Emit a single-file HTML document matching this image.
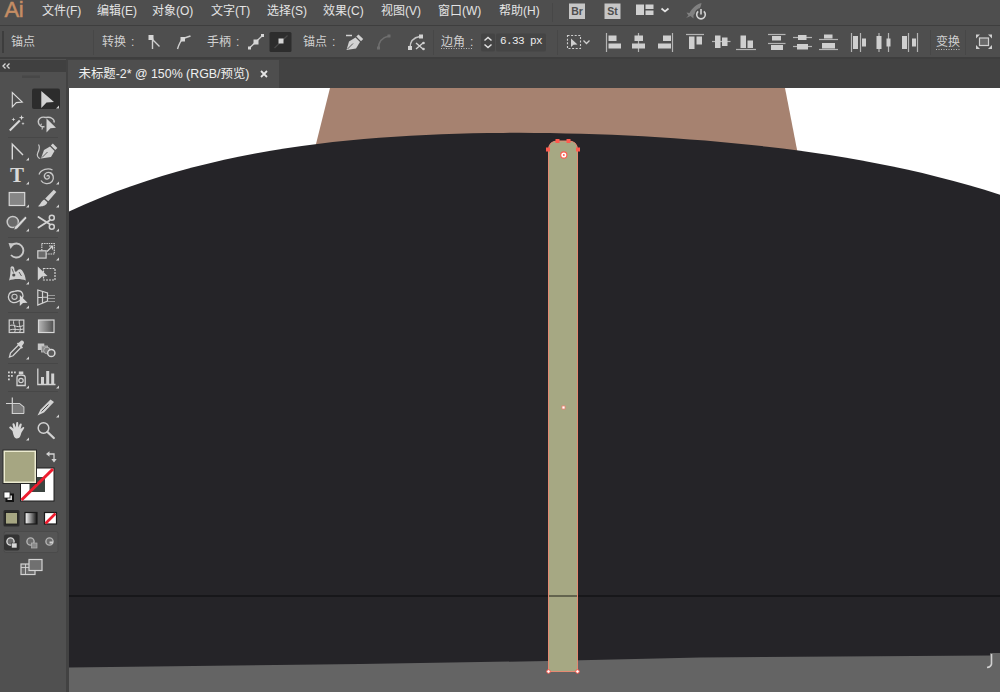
<!DOCTYPE html>
<html lang="zh-CN">
<head>
<meta charset="utf-8">
<title>Ai</title>
<style>
*{box-sizing:border-box;margin:0;padding:0}
html,body{width:1000px;height:692px;overflow:hidden;background:#535353;font-family:"Liberation Sans","Noto Sans CJK SC",sans-serif;}
#app{position:relative;width:1000px;height:692px;background:#4e4e4e;overflow:hidden}
.abs{position:absolute}
#menubar{left:0;top:0;width:1000px;height:25px;background:#4e4e4e}
#menubar .mi{position:absolute;top:3px;font-size:12px;line-height:16px;color:#e4e4e4;white-space:nowrap}
#ailogo{position:absolute;left:4.500px;top:-1.500px;font-size:22px;line-height:22px;color:#c48d64;font-weight:400;letter-spacing:-0.300px;-webkit-text-stroke:0.500px #c48d64}
#ctrl{z-index:2;left:0;top:25px;width:1000px;height:34px;background:transparent;border-top:1px solid #3e3e3e;border-bottom:2px solid #3e3e3e}
#ctrl .t{position:absolute;z-index:5;top:7.500px;font-size:12px;line-height:16px;color:#d0d0d0;white-space:nowrap}
#tabbar{left:68px;top:59px;width:932px;height:29px;background:#424242}
#tab{position:absolute;left:0;top:0.500px;width:210.500px;height:28.500px;background:#4e4e4e;color:#e8e8e8;font-size:12px;line-height:16px}
#tools{left:0;top:59px;width:66px;height:633px;background:#505050}
#tools .hd{position:absolute;left:0;top:1px;width:66px;height:12px;background:#404040}
#gut{left:66px;top:59px;width:3px;height:633px;background:#424242}
#canvas{left:69px;top:88px;width:931px;height:604px;background:#fff;overflow:hidden}
</style>
</head>
<body>
<div id="app">
  <div id="menubar" class="abs">
    <div id="ailogo">Ai</div>
    <div class="mi" style="left:42px">文件(F)</div>
    <div class="mi" style="left:97px">编辑(E)</div>
    <div class="mi" style="left:152px">对象(O)</div>
    <div class="mi" style="left:211px">文字(T)</div>
    <div class="mi" style="left:267px">选择(S)</div>
    <div class="mi" style="left:323px">效果(C)</div>
    <div class="mi" style="left:381px">视图(V)</div>
    <div class="mi" style="left:438px">窗口(W)</div>
    <div class="mi" style="left:499px">帮助(H)</div>
    <svg class="abs" style="left:540px;top:0;z-index:1" width="200" height="25" viewBox="540 0 200 25" fill="none">
      <line x1="552.500" y1="3" x2="552.500" y2="22" stroke="#474747" stroke-width="1"/>
      <rect x="569" y="3.500" width="16" height="15.500" fill="#c6c6c6"/>
      <text x="577" y="15.300" text-anchor="middle" font-family="'Liberation Sans',sans-serif" font-weight="700" font-size="10.500" fill="#4e4e4e">Br</text>
      <rect x="604.500" y="3.500" width="16" height="15.500" fill="#c6c6c6"/>
      <text x="612.500" y="15.300" text-anchor="middle" font-family="'Liberation Sans',sans-serif" font-weight="700" font-size="10.500" fill="#4e4e4e">St</text>
      <rect x="636" y="4.500" width="8" height="10.500" fill="#d0d0d0"/>
      <rect x="645.500" y="4.500" width="8" height="4.500" fill="#d0d0d0"/>
      <rect x="645.500" y="10.500" width="8" height="4.500" fill="#d0d0d0"/>
      <path d="M661.500,8.500 L665,11.500 L668.500,8.500" stroke="#e4e4e4" stroke-width="1.700"/>
      <path d="M701.500,3 C697,4 692,8 689.500,13 L686.500,12.500 L688.500,15.500 L686,18 L690.500,16 L693.500,18.500 L693.500,15 C698,12 701,8 701.500,3 Z" fill="#808080"/>
      <circle cx="701" cy="14.500" r="6.500" fill="#4e4e4e"/>
      <path d="M698.200,11.300 A4.300,4.300 0 1 0 703.800,11.300" stroke="#d4d4d4" stroke-width="1.600"/>
      <line x1="701" y1="9" x2="701" y2="14.500" stroke="#d4d4d4" stroke-width="1.600"/>
    </svg>
  </div>
  <div id="ctrl" class="abs">
    <div class="t" style="left:11px">锚点</div>
    <div class="t" style="left:102px">转换<span style="margin-left:5px">:</span></div>
    <div class="t" style="left:207px">手柄<span style="margin-left:5px">:</span></div>
    <div class="t" style="left:303px">锚点<span style="margin-left:5px">:</span></div>
    <div class="t" style="left:441px">边角<span style="margin-left:5px">:</span></div>
    <div class="t" style="left:936px">变换</div>
    <div class="t" style="left:500px;top:8px;line-height:14px;font-family:'Liberation Mono',monospace;font-size:11px;color:#ececec;letter-spacing:-0.600px">6.33 px</div>
  </div>
  <svg class="abs" style="left:0;top:25px;z-index:1" width="1000" height="34" viewBox="0 25 1000 34" fill="none">
      <!-- grip & separators -->
      <rect x="2" y="31" width="2" height="22" fill="#3d3d3d"/>
      <g stroke="#474747" stroke-width="1"><line x1="93.500" y1="30" x2="93.500" y2="55"/><line x1="433.500" y1="30" x2="433.500" y2="55"/><line x1="557.500" y1="30" x2="557.500" y2="55"/><line x1="930.500" y1="30" x2="930.500" y2="55"/><line x1="965.500" y1="30" x2="965.500" y2="55"/></g>
      <!-- convert icons -->
      <path d="M152.500,38 L152.500,49 M152.500,39.500 L159.500,46.500" stroke="#cfcfcf" stroke-width="1.400"/>
      <rect x="148.500" y="35" width="5" height="5" fill="#d6d6d6"/>
      <path d="M177.500,49 C179,44 180.500,41 183,38.500 C185.500,37.500 188,37 190.500,36" stroke="#cfcfcf" stroke-width="1.400"/>
      <rect x="180.500" y="37" width="4.500" height="4.500" fill="#d6d6d6"/>
      <!-- handle icons -->
      <path d="M249.500,48 L262.500,35.500" stroke="#cfcfcf" stroke-width="1.300"/>
      <rect x="253.500" y="39.500" width="5" height="5" fill="#d6d6d6"/>
      <rect x="248" y="46.500" width="3" height="3" fill="#d6d6d6"/><rect x="261" y="34" width="3" height="3" fill="#d6d6d6"/>
      <rect x="269.500" y="32" width="22" height="20" rx="1.500" fill="#2d2d2d"/>
      <path d="M274.500,48 L287.500,35.500" stroke="#4a4a4a" stroke-width="1.200"/>
      <rect x="278.500" y="38.500" width="5" height="5" fill="#d6d6d6"/>
      <!-- anchor icons: remove anchor pen -->
      <path d="M346.500,50 L349,41.500 L355.500,37.500 L360,42 L356,48.500 Z" fill="#d2d2d2"/>
      <path d="M356.300,36.600 L358.500,34.400 L363.200,39.100 L361,41.300 Z" fill="#d2d2d2"/>
      <path d="M347.500,49 L353,43.500" stroke="#4e4e4e" stroke-width="0.900"/>
      <path d="M346,35.500 L352,35.500" stroke="#d2d2d2" stroke-width="1.500"/>
      <path d="M378.500,48.500 C378.500,42 382,37.500 389,36" stroke="#6e6e6e" stroke-width="1.500"/>
      <rect x="377" y="46.500" width="3" height="3" fill="#6e6e6e"/><rect x="387.500" y="34.500" width="3" height="3" fill="#6e6e6e"/>
      <path d="M410,48 C410,42 413.500,37.500 420,36.500" stroke="#c4c4c4" stroke-width="1.400"/>
      <rect x="408" y="46" width="4" height="4" fill="#d2d2d2"/><rect x="419" y="34.500" width="4" height="4" fill="#d2d2d2"/>
      <path d="M416,43 L423,49 M423,43 L416,49" stroke="#d2d2d2" stroke-width="1.400"/>
      <circle cx="423.500" cy="43" r="1.300" fill="#d2d2d2"/><circle cx="423.500" cy="49" r="1.300" fill="#d2d2d2"/>
      <!-- corners underline, spinner, field -->
      <line x1="441" y1="48.500" x2="473" y2="48.500" stroke="#bdbdbd" stroke-width="1" stroke-dasharray="1 1.500"/>
      <rect x="481" y="33.500" width="14" height="18" rx="2" fill="#444444"/>
      <path d="M484.500,40.500 L488,37.500 L491.500,40.500 M484.500,44.500 L488,47.500 L491.500,44.500" stroke="#e2e2e2" stroke-width="1.500"/>
      <rect x="496" y="33.500" width="50" height="18" rx="2" fill="#454545"/>
      <!-- isolate icon -->
      <rect x="567.500" y="35.500" width="13" height="13" stroke="#cfcfcf" stroke-width="1.100" stroke-dasharray="2 1.600"/>
      <path d="M571,38.500 L571,47 L573.500,44.700 L577.500,44.500 Z" fill="#cfcfcf"/>
      <path d="M583.500,40.500 L586.500,43.500 L589.500,40.500" stroke="#cfcfcf" stroke-width="1.300"/>
      <line x1="606.5" y1="33" x2="606.5" y2="52" stroke="#b4b4b4" stroke-width="1.2"/>
      <rect x="608.5" y="35.5" width="8" height="5.5" fill="#cfcfcf"/>
      <rect x="608.5" y="43.5" width="12.5" height="5" fill="#cfcfcf"/>
      <line x1="638.5" y1="33" x2="638.5" y2="52" stroke="#b4b4b4" stroke-width="1.2"/>
      <rect x="634.5" y="35.5" width="8.5" height="5.5" fill="#cfcfcf"/>
      <rect x="632" y="43.5" width="13" height="5" fill="#cfcfcf"/>
      <line x1="672.5" y1="33" x2="672.5" y2="52" stroke="#b4b4b4" stroke-width="1.2"/>
      <rect x="663" y="35.5" width="8" height="5.5" fill="#cfcfcf"/>
      <rect x="658" y="43.5" width="13" height="5" fill="#cfcfcf"/>
      <line x1="686" y1="34.5" x2="704" y2="34.5" stroke="#b4b4b4" stroke-width="1.2"/>
      <rect x="689" y="36.5" width="5.5" height="12.5" fill="#cfcfcf"/>
      <rect x="696.5" y="36.5" width="5.5" height="8" fill="#cfcfcf"/>
      <line x1="712" y1="41.5" x2="730.5" y2="41.5" stroke="#b4b4b4" stroke-width="1.2"/>
      <rect x="715" y="35.5" width="5.5" height="12.5" fill="#cfcfcf"/>
      <rect x="722" y="37.5" width="5.5" height="8.5" fill="#cfcfcf"/>
      <line x1="736" y1="49.5" x2="756" y2="49.5" stroke="#b4b4b4" stroke-width="1.2"/>
      <rect x="740.5" y="35.5" width="5.5" height="12.5" fill="#cfcfcf"/>
      <rect x="747.5" y="40.5" width="5.5" height="7.5" fill="#cfcfcf"/>
      <line x1="768" y1="34.5" x2="785.5" y2="34.5" stroke="#b4b4b4" stroke-width="1.2"/>
      <line x1="768" y1="43.5" x2="785.5" y2="43.5" stroke="#b4b4b4" stroke-width="1.2"/>
      <rect x="772" y="36" width="9" height="4.5" fill="#cfcfcf"/>
      <rect x="771" y="45" width="12" height="5" fill="#cfcfcf"/>
      <line x1="793" y1="37.5" x2="812" y2="37.5" stroke="#b4b4b4" stroke-width="1.2"/>
      <line x1="793" y1="46.5" x2="812" y2="46.5" stroke="#b4b4b4" stroke-width="1.2"/>
      <rect x="798" y="35" width="8.5" height="5" fill="#cfcfcf"/>
      <rect x="797" y="44" width="11" height="5.5" fill="#cfcfcf"/>
      <line x1="819" y1="39.5" x2="838" y2="39.5" stroke="#b4b4b4" stroke-width="1.2"/>
      <line x1="819" y1="49.5" x2="838" y2="49.5" stroke="#b4b4b4" stroke-width="1.2"/>
      <rect x="824" y="34.5" width="8.5" height="4" fill="#cfcfcf"/>
      <rect x="822" y="43" width="13" height="5.5" fill="#cfcfcf"/>
      <line x1="851.5" y1="33" x2="851.5" y2="52" stroke="#b4b4b4" stroke-width="1.2"/>
      <line x1="860.5" y1="33" x2="860.5" y2="52" stroke="#b4b4b4" stroke-width="1.2"/>
      <rect x="853" y="36" width="5" height="13" fill="#cfcfcf"/>
      <rect x="862" y="38.5" width="4" height="8" fill="#cfcfcf"/>
      <line x1="879" y1="33" x2="879" y2="52" stroke="#b4b4b4" stroke-width="1.2"/>
      <line x1="888.5" y1="33" x2="888.5" y2="52" stroke="#b4b4b4" stroke-width="1.2"/>
      <rect x="876.5" y="36" width="5" height="13" fill="#cfcfcf"/>
      <rect x="886.5" y="38.5" width="4" height="8" fill="#cfcfcf"/>
      <line x1="908.5" y1="33" x2="908.5" y2="52" stroke="#b4b4b4" stroke-width="1.2"/>
      <line x1="917.5" y1="33" x2="917.5" y2="52" stroke="#b4b4b4" stroke-width="1.2"/>
      <rect x="902" y="36" width="5" height="13" fill="#cfcfcf"/>
      <rect x="912" y="38.5" width="4" height="8" fill="#cfcfcf"/>
      <!-- transform underline -->
      <line x1="936" y1="49.500" x2="960" y2="49.500" stroke="#bdbdbd" stroke-width="1" stroke-dasharray="1 1.500"/>
      <!-- last icon -->
      <rect x="979.500" y="38" width="9" height="7.500" stroke="#d0d0d0" stroke-width="1.200" fill="#6a6a6a"/>
      <path d="M976,34.500 L980,34.500 L976,38.500 Z M992,34.500 L988,34.500 L992,38.500 Z M976,49 L980,49 L976,45 Z M992,49 L988,49 L992,45 Z" fill="#d0d0d0"/>
    </svg>
  <div id="tools" class="abs"><div class="hd"></div></div>
  <svg class="abs" style="left:0;top:59px" width="66" height="633" viewBox="0 59 66 633" fill="none" stroke="none">
    <!-- header -->
    <path d="M5.500,63.500 L3,66 L5.500,68.500 M9.500,63.500 L7,66 L9.500,68.500" stroke="#d8d8d8" stroke-width="1.300" fill="none"/>
    <rect x="22" y="75.500" width="18" height="2.500" fill="#474747"/>
    <!-- separators -->
    <g stroke="#474747" stroke-width="1">
      <line x1="8" y1="137.500" x2="58" y2="137.500"/><line x1="8" y1="237.500" x2="58" y2="237.500"/>
      <line x1="8" y1="312.500" x2="58" y2="312.500"/><line x1="8" y1="363.500" x2="58" y2="363.500"/>
      <line x1="8" y1="391.500" x2="58" y2="391.500"/>
    </g>
    <!-- selected tool bg -->
    <rect x="32" y="88.500" width="28" height="20.500" rx="2" fill="#2c2c2c"/>
    <!-- row1 -->
    <path d="M12.300,92.500 L12.300,106.800 L16.300,102.600 L22.300,102.100 Z" stroke="#dcdcdc" stroke-width="1.100" stroke-linejoin="miter"/>
    <path d="M41.300,91 L41.300,108 L46.500,102.600 L54,102 Z" fill="#d2d2d2"/>
    <!-- row2 wand & lasso -->
    <path d="M9.800,130.500 L19.800,120.500" stroke="#d8d8d8" stroke-width="2"/>
    <path d="M21.500,115 L22.300,117 L24.300,117.500 L22.300,118.200 L21.500,120.200 L20.800,118.200 L18.800,117.500 L20.800,117 Z M13.500,117.500 l0.600,1.400 l1.400,0.500 l-1.400,0.500 l-0.600,1.400 l-0.600,-1.400 l-1.400,-0.500 l1.400,-0.500 Z M23,122 l0.500,1.200 l1.200,0.400 l-1.200,0.400 l-0.500,1.200 l-0.500,-1.200 l-1.200,-0.400 l1.200,-0.400 Z" fill="#d8d8d8"/>
    <path d="M46,117.500 C41,116 37.500,119 38.500,123 C39.300,126 42,127.500 44.500,126.500 M46,117.500 C51,116.500 55,119.500 54,122.500" stroke="#c8c8c8" stroke-width="1.400"/>
    <path d="M42,124 c-1.500,0 -1.800,2 -0.500,2.500 c1,0.400 1.200,1.800 0.300,3" stroke="#c8c8c8" stroke-width="1.100"/>
    <path d="M46.500,118.500 L46.500,132.500 L50.500,128.300 L56,127.800 Z" fill="#d2d2d2"/>
    <!-- row3 anchor & curvature pen -->
    <path d="M12.300,159.500 L12.300,144.300 L23,155" stroke="#d8d8d8" stroke-width="1.400"/>
    <path d="M38.500,144.500 c2,3 0.500,6 -0.800,8.500 c-1,2.200 0,5 2.500,5.500" stroke="#c8c8c8" stroke-width="1.200"/>
    <path d="M41,158.500 L44,150 L50,146.500 L54.500,151 L51,157 Z" fill="#d2d2d2"/>
    <path d="M50.800,145.600 L52.800,143.600 L57.300,148.100 L55.300,150.100 Z" fill="#d2d2d2"/>
    <path d="M42,157.500 L47.500,152" stroke="#4e4e4e" stroke-width="0.900"/>
    <!-- row4 type & spiral -->
    <text x="17" y="182.300" text-anchor="middle" font-family="'Liberation Serif',serif" font-size="21" font-weight="700" fill="#d8d8d8">T</text>
    <path d="M47,176.500 C47,175 49,175 49.300,176.800 C49.600,179 46.500,180 45,178 C43,175.500 46,171.500 49.500,172.500 C53.500,173.500 54.500,178.500 52,181.500 C49,185 43,184 41,180.500 M39,174.500 C41,169.500 48,167.500 52.500,170" stroke="#c8c8c8" stroke-width="1.300"/>
    <!-- row5 rect & brush -->
    <rect x="9.200" y="192.500" width="15.500" height="13" fill="#868686" stroke="#d8d8d8" stroke-width="1.200"/>
    <path d="M53.800,189.800 L56.300,192 L48.300,201.300 L45.200,198.600 Z" fill="#d2d2d2"/>
    <path d="M44.200,199.600 L47.300,202.300 C46.500,206 41.500,207 38,206.200 C40.500,205 40.800,201.500 44.200,199.600 Z" fill="#d2d2d2"/>
    <!-- row6 shaper & scissors -->
    <circle cx="12.800" cy="222" r="5.600" stroke="#c8c8c8" stroke-width="1.500" fill="#6a6a6a"/>
    <path d="M25.300,216.300 L27,218 L17,229 L13.800,230 L14.800,226.800 Z" fill="#d8d8d8" stroke="#4e4e4e" stroke-width="0.600"/>
    <path d="M38.500,217 L49.500,224 M38.500,227.500 L49.500,220.500" stroke="#d2d2d2" stroke-width="1.900" stroke-linecap="round"/>
    <circle cx="51.800" cy="217.800" r="2.500" stroke="#d2d2d2" stroke-width="1.500"/>
    <circle cx="51.800" cy="226.800" r="2.500" stroke="#d2d2d2" stroke-width="1.500"/>
    <!-- row7 rotate & scale -->
    <path d="M11.500,245.500 A7,7 0 1 1 11,255" stroke="#c8c8c8" stroke-width="1.800"/>
    <path d="M8.500,243 L14.500,243.500 L10.500,249 Z" fill="#c8c8c8"/>
    <rect x="41.800" y="243.500" width="12.500" height="10.500" stroke="#d2d2d2" stroke-width="1.200" stroke-dasharray="1.500 0.800"/>
    <rect x="37.800" y="250.800" width="8.300" height="7.300" fill="#6a6a6a" stroke="#d2d2d2" stroke-width="1.200"/>
    <path d="M47,251.500 L52,246.500 M49,246 L52.500,246 L52.500,249.500" stroke="#d2d2d2" stroke-width="1.200"/>
    <!-- row8 width & free transform -->
    <path d="M9,280.500 C10.500,276 10.500,271 10.500,267.500 C11.500,265.500 14,266 14.300,268.500 C14.500,271.500 15.500,273 17.500,270.500 C19,268.500 21.500,269 22.500,271 C24.500,274 25.500,277 25.800,280.500 C21,278.500 14,278.500 9,280.500 Z" fill="#cfcfcf"/>
    <circle cx="13.800" cy="275" r="1.600" fill="#4e4e4e"/><path d="M12,268.500 L13.500,272.500 M19,272 L21.500,276" stroke="#4e4e4e" stroke-width="0.900"/>
    <path d="M37.800,266.500 L37.800,280.500 L42,276.500 L47.500,276 Z" fill="#d2d2d2"/>
    <rect x="43.500" y="268.500" width="11.500" height="11.500" stroke="#d2d2d2" stroke-width="1.200" stroke-dasharray="2 1"/>
    <!-- row9 shape builder & perspective -->
    <path d="M14,291.500 C9,291.500 7.500,296 9,299.500 C10.500,303 15,303.500 18,301.500 C22,300 24,296.500 22.500,293.500 C21,290.500 17,290.500 14,291.500 Z" stroke="#d2d2d2" stroke-width="1.300"/>
    <circle cx="14.500" cy="296.800" r="2.600" stroke="#c8c8c8" stroke-width="1.100"/>
    <path d="M19.800,295 L19.800,306 L23,303 L27.500,302.700 Z" fill="#d8d8d8"/>
    <path d="M37.800,290 L37.800,305 L47.500,301 L47.500,293 Z M42.500,291.500 L42.500,303 M37.800,297.500 L47.500,297" stroke="#d2d2d2" stroke-width="1.200"/>
    <path d="M48,295.500 L55,295.500 M48,298.500 L55,298.500 M48,301.500 L55,301.500" stroke="#9a9a9a" stroke-width="1"/>
    <!-- row10 mesh & gradient -->
    <rect x="9.200" y="320" width="14.600" height="12.500" stroke="#d2d2d2" stroke-width="1.200"/>
    <path d="M9.500,326 C13,323 16,329 23.500,325.500 M14,320 C12,324 17,328 14.500,332.500 M19.500,320 C18,324 22,328 19.500,332.500 M9.500,330 C14,328 18,331 23.500,329" stroke="#d2d2d2" stroke-width="1"/>
    <linearGradient id="gg" x1="0" y1="0" x2="1" y2="0"><stop offset="0" stop-color="#b8b8b8"/><stop offset="1" stop-color="#4c4c4c"/></linearGradient>
    <rect x="38.500" y="320" width="15.500" height="12.500" fill="url(#gg)" stroke="#d8d8d8" stroke-width="1.200"/>
    <!-- row11 eyedropper & blend -->
    <path d="M9.500,357 L10.500,353 L19,344.500 L21.500,347 L13,355.800 Z" stroke="#d2d2d2" stroke-width="1.300"/>
    <path d="M18.500,343 L21,340.800 C22.500,339.800 24.800,341.800 23.800,343.600 L21.800,346.200 L23,347.500 L21.800,348.700 L16.800,343.700 L18,342.500 Z" fill="#d2d2d2"/>
    <rect x="37.800" y="343.500" width="6.500" height="6.500" fill="#c8c8c8"/>
    <rect x="41.500" y="346" width="6" height="6" fill="#8c8c8c" stroke="#bdbdbd" stroke-width="0.800"/>
    <circle cx="47" cy="350.500" r="3.300" fill="#7a7a7a" stroke="#c0c0c0" stroke-width="0.800"/>
    <circle cx="51.300" cy="353" r="3.600" fill="#5a5a5a" stroke="#d8d8d8" stroke-width="1.500"/>
    <!-- row12 symbol sprayer & graph -->
    <g fill="#d2d2d2"><rect x="8" y="371.500" width="1.800" height="1.800"/><rect x="11" y="371.500" width="1.800" height="1.800"/><rect x="14" y="371.500" width="1.800" height="1.800"/><rect x="8" y="375" width="1.800" height="1.800"/><rect x="11" y="375" width="1.800" height="1.800"/><rect x="8" y="378.500" width="1.800" height="1.800"/></g>
    <rect x="18.800" y="371.500" width="4.500" height="2.500" fill="#d2d2d2"/>
    <path d="M17,377.500 C17,375.500 18.500,375 21,375 C23.500,375 25.200,375.500 25.200,377.500 L25.200,385.500 L17,385.500 Z" stroke="#d2d2d2" stroke-width="1.300"/>
    <circle cx="21" cy="380.500" r="2.200" stroke="#d2d2d2" stroke-width="1.200"/>
    <path d="M37.800,368.500 L37.800,384.500 L55.500,384.500" stroke="#d2d2d2" stroke-width="1.300"/>
    <rect x="41" y="377" width="3" height="7.500" fill="#d2d2d2"/><rect x="46.200" y="371" width="3" height="13.500" fill="#d2d2d2"/><rect x="51.200" y="373.500" width="3" height="11" fill="#d2d2d2"/>
    <!-- row13 artboard & slice -->
    <path d="M12.300,397.500 L12.300,413.500 L24,413.500 M6,403.500 L19.500,403.500 L23.800,407 L23.800,413.500" stroke="#d2d2d2" stroke-width="1.200"/>
    <path d="M13,404.200 L19.200,404.200 L23.200,407.300 L23.200,413 L13,413 Z" fill="#7a7a7a"/>
    <path d="M50.500,399.500 L54,402 L44,412.500 L37.500,415.500 L40.500,409.500 Z" fill="#d2d2d2"/>
    <path d="M41.500,411.500 L48.500,404.500" stroke="#4e4e4e" stroke-width="1"/>
    <!-- row14 hand & zoom -->
    <path d="M12.500,431 L9.500,428.200 C8.700,427.200 10,426 11.200,426.800 L13.500,428.800 L12.500,424.500 C12.300,423.200 14.100,422.800 14.500,424 L15.800,427.500 L16.200,423 C16.300,421.700 18.200,421.800 18.200,423.100 L18.300,427.500 L19.800,424 C20.300,422.900 22,423.500 21.700,424.700 L20.600,429 L22.800,427.200 C23.800,426.500 24.800,427.700 24,428.600 L21.500,432.500 C20.500,435.500 20,438.500 17,438.500 C14.500,438.500 13.500,436 12.500,431 Z" fill="#d8d8d8"/>
    <circle cx="43.500" cy="428" r="5.300" stroke="#d2d2d2" stroke-width="1.500"/>
    <path d="M47.500,432 L53.800,438" stroke="#d2d2d2" stroke-width="2.300" stroke-linecap="round"/>
    <!-- flyout triangles -->
    <g fill="#d2d2d2">
      <path d="M59,105.500 L59,108.500 L56,108.500 Z"/>
      <path d="M29,157.500 L29,160.500 L26,160.500 Z"/>
      <path d="M29,181.500 L29,184.500 L26,184.500 Z"/><path d="M59,181.500 L59,184.500 L56,184.500 Z"/>
      <path d="M29,204.500 L29,207.500 L26,207.500 Z"/><path d="M59,204.500 L59,207.500 L56,207.500 Z"/>
      <path d="M29,228.500 L29,231.500 L26,231.500 Z"/><path d="M59,228.500 L59,231.500 L56,231.500 Z"/>
      <path d="M29,257.500 L29,260.500 L26,260.500 Z"/><path d="M59,257.500 L59,260.500 L56,260.500 Z"/>
      <path d="M29,281.500 L29,284.500 L26,284.500 Z"/>
      <path d="M29,305.500 L29,308.500 L26,308.500 Z"/><path d="M59,305.500 L59,308.500 L56,308.500 Z"/>
      <path d="M29,356.500 L29,359.500 L26,359.500 Z"/>
      <path d="M29,385.500 L29,388.500 L26,388.500 Z"/><path d="M59,385.500 L59,388.500 L56,388.500 Z"/>
      <path d="M59,414.500 L59,417.500 L56,417.500 Z"/>
      <path d="M29,437.500 L29,440.500 L26,440.500 Z"/>
    </g>
    <!-- stroke swatch -->
    <rect x="20" y="467.500" width="34.500" height="34" fill="#1e1e1e"/>
    <rect x="21" y="468.500" width="32.500" height="32" fill="#ffffff"/>
    <rect x="29.500" y="477" width="15.500" height="15" fill="#3c4440"/>
    <path d="M21.500,500 L53,469" stroke="#ee1c2e" stroke-width="3"/>
    <!-- fill swatch -->
    <rect x="2.500" y="449.500" width="34.500" height="34.500" fill="#2a2a2a"/>
    <rect x="3.500" y="450.500" width="32.500" height="32.500" fill="#ecebd0"/>
    <rect x="5" y="452" width="29.500" height="29.500" fill="#a6a682"/>
    <!-- swap arrows -->
    <path d="M48.500,454 L54,454 L54,460" stroke="#d2d2d2" stroke-width="1.300"/>
    <path d="M46,454 L49.500,451.300 L49.500,456.700 Z M54,462.500 L51.300,459 L56.700,459 Z" fill="#d2d2d2"/>
    <!-- default fill/stroke -->
    <rect x="6.500" y="494.500" width="6.500" height="6.500" fill="#dcdcdc" stroke="#111" stroke-width="2"/>
    <rect x="4" y="492" width="6" height="6" fill="#ffffff" stroke="#2a2a2a" stroke-width="0.800"/>
    <!-- color mode buttons -->
    <rect x="3.500" y="510" width="16" height="16.500" rx="1.500" fill="#2c2c2c"/>
    <rect x="5.500" y="512.500" width="12" height="11.500" fill="#a6a682" stroke="#1a1a1a" stroke-width="0.800"/>
    <linearGradient id="gw" x1="0" y1="0" x2="1" y2="0"><stop offset="0" stop-color="#ffffff"/><stop offset="1" stop-color="#111"/></linearGradient>
    <rect x="25" y="512.500" width="12" height="11.500" fill="url(#gw)" stroke="#1a1a1a" stroke-width="1.200"/>
    <rect x="44.500" y="512.500" width="12" height="11.500" fill="#ffffff" stroke="#1a1a1a" stroke-width="1.200"/>
    <path d="M45.500,523.500 L55.500,513.500" stroke="#ee1c2e" stroke-width="2.600"/>
    <!-- drawing modes -->
    <rect x="4" y="531.500" width="54" height="21" rx="2" fill="#555555" stroke="#4a4a4a" stroke-width="1"/>
    <rect x="4" y="534.500" width="15.500" height="16" rx="2" fill="#333"/>
    <circle cx="10.500" cy="541.500" r="3.600" fill="#6a6a6a" stroke="#d8d8d8" stroke-width="1.400"/>
    <rect x="11.500" y="543" width="5.500" height="5" fill="#d8d8d8" stroke="#333" stroke-width="0.600"/>
    <circle cx="30.500" cy="541.500" r="3.600" fill="#6a6a6a" stroke="#b4b4b4" stroke-width="1.400"/>
    <rect x="31.500" y="543" width="5.500" height="5" fill="#8a8a8a" stroke="#b4b4b4" stroke-width="0.700"/>
    <circle cx="49.500" cy="541.500" r="3.600" fill="#6a6a6a" stroke="#b4b4b4" stroke-width="1.400"/>
    <path d="M49.500,541.500 L53,541.500 L53,543.500 L49.500,543.500 Z" fill="#d0d0d0"/>
    <!-- screen mode -->
    <rect x="21" y="564" width="14" height="10.500" fill="#6a6a6a" stroke="#d2d2d2" stroke-width="1.200"/>
    <path d="M21,567.500 L35,567.500 M25.500,564 L25.500,574.500" stroke="#d2d2d2" stroke-width="0.900"/>
    <rect x="29" y="559.500" width="13" height="11" fill="#707070" stroke="#d2d2d2" stroke-width="1.200"/>
  </svg>
  <div id="gut" class="abs"></div>
  <div id="tabbar" class="abs"><div id="tab"><span style="position:absolute;left:10.500px;top:6.500px;white-space:nowrap;font-size:12.400px;color:#f0f0f0">未标题-2* @ 150% (RGB/预览)</span><svg style="position:absolute;left:192px;top:10px" width="8" height="8" viewBox="0 0 8 8"><path d="M1,1 L7,7 M7,1 L1,7" stroke="#e6e6e6" stroke-width="1.800"/></svg></div></div>
  <div id="canvas" class="abs">
    <svg width="931" height="604" viewBox="69 88 931 604" style="position:absolute;left:0;top:0">
      <rect x="69" y="88" width="931" height="604" fill="#ffffff"/>
      <polygon points="330,88 785,88 799,160 312,160" fill="#a68270"/>
      <path d="M69.0,211.4 L84.5,204.4 L100.0,197.9 L115.6,191.8 L131.1,186.2 L146.6,180.9 L162.1,176.0 L177.6,171.5 L193.1,167.3 L208.7,163.4 L224.2,159.8 L239.7,156.5 L255.2,153.5 L270.7,150.8 L286.2,148.3 L301.8,146.0 L317.3,144.0 L332.8,142.1 L348.3,140.5 L363.8,139.0 L379.3,137.8 L394.9,136.7 L410.4,135.7 L425.9,134.9 L441.4,134.2 L456.9,133.7 L472.4,133.3 L488.0,133.0 L503.5,132.9 L519.0,132.8 L534.5,132.9 L550.0,133.1 L565.5,133.4 L581.1,133.8 L596.6,134.2 L612.1,134.8 L627.6,135.5 L643.1,136.3 L658.6,137.2 L674.1,138.2 L689.7,139.4 L705.2,140.6 L720.7,141.9 L736.2,143.4 L751.7,145.0 L767.2,146.7 L782.8,148.6 L798.3,150.6 L813.8,152.8 L829.3,155.1 L844.8,157.6 L860.4,160.3 L875.9,163.2 L891.4,166.3 L906.9,169.6 L922.4,173.1 L937.9,176.9 L953.5,180.9 L969.0,185.2 L984.5,189.8 L1000.0,194.7 L1000,692 L69,692 Z" fill="#252428"/>
      <polygon points="69,667.5 360,664 548,661 700,657.5 990,655.5 990,653 1000,653 1000,692 69,692" fill="#646464"/>
      <path d="M991.5,654 L991.5,664 Q991,667 987,667.5" fill="none" stroke="#d0d0d0" stroke-width="1.6"/>
      <line x1="69" y1="596" x2="1000" y2="596" stroke="#0b0b0d" stroke-width="1.2"/>
      <path d="M548.5,671.5 L548.5,150 Q548.5,141 557.5,141 L568.5,141 Q577.5,141 577.5,150 L577.5,671.5 Z" fill="#a6a883" stroke="#e58a72" stroke-width="1"/>
      <line x1="549" y1="596" x2="577" y2="596" stroke="#2c2c24" stroke-width="1.1"/>
      <g fill="#ff5a4e">
        <rect x="546" y="147.500" width="4" height="4"/><rect x="555.5" y="139" width="4" height="4"/>
        <rect x="566.500" y="139" width="4" height="4"/><rect x="576" y="147.500" width="4" height="4"/>
      </g>
      <circle cx="563.8" cy="155" r="3.1" fill="#fff" stroke="#ff5a4e" stroke-width="1.1"/>
      <circle cx="563.8" cy="155" r="1" fill="#ff5a4e"/>
      <rect x="562" y="406" width="3" height="3" fill="#fff" stroke="#f08070" stroke-width="0.8"/>
      <circle cx="548.5" cy="671.5" r="1.8" fill="#fff" stroke="#ff5a4e" stroke-width="1"/>
      <circle cx="577.5" cy="671.5" r="1.8" fill="#fff" stroke="#ff5a4e" stroke-width="1"/>
    </svg>
  </div>
</div>
</body>
</html>
